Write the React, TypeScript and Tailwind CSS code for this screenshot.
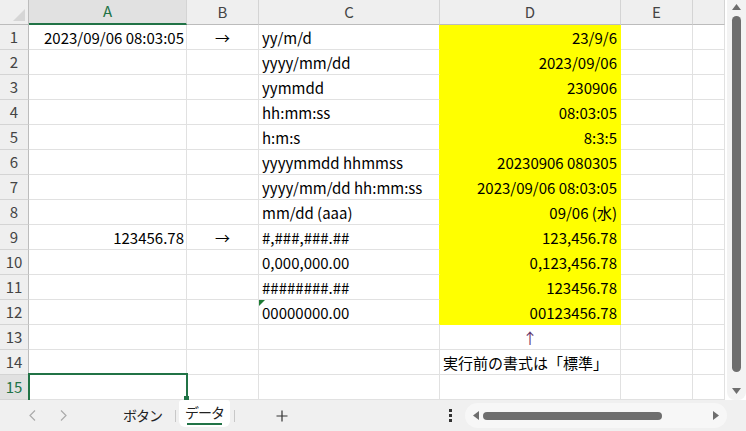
import React from 'react'

type Row = {
  a?: string
  b?: string
  c?: string
  d?: string
  dAlign?: 'left' | 'center' | 'right'
  yellow?: boolean
  tri?: boolean
}

const rows: Row[] = [
  { a: '2023/09/06 08:03:05', b: '→', c: 'yy/m/d', d: '23/9/6', yellow: true },
  { c: 'yyyy/mm/dd', d: '2023/09/06', yellow: true },
  { c: 'yymmdd', d: '230906', yellow: true },
  { c: 'hh:mm:ss', d: '08:03:05', yellow: true },
  { c: 'h:m:s', d: '8:3:5', yellow: true },
  { c: 'yyyymmdd hhmmss', d: '20230906 080305', yellow: true },
  { c: 'yyyy/mm/dd hh:mm:ss', d: '2023/09/06 08:03:05', yellow: true },
  { c: 'mm/dd (aaa)', d: '09/06 (水)', yellow: true },
  { a: '123456.78', b: '→', c: '#,###,###.##', d: '123,456.78', yellow: true },
  { c: '0,000,000.00', d: '0,123,456.78', yellow: true },
  { c: '########.##', d: '123456.78', yellow: true },
  { c: '00000000.00', d: '00123456.78', yellow: true, tri: true },
  { d: '↑', dAlign: 'center' },
  { d: '実行前の書式は「標準」', dAlign: 'left' },
  {},
]

const font = { fontFamily: '"Noto Sans CJK JP", "Noto Sans", sans-serif' }

const Cell = ({ w, children, className = '' }: { w: string; children?: React.ReactNode; className?: string }) => (
  <div className={`${w} h-full shrink-0 flex items-center border-r border-b border-[#e1e1e1] overflow-hidden whitespace-nowrap leading-none ${className}`}>
    {children}
  </div>
)

const Chevron = ({ dir }: { dir: 'left' | 'right' }) => (
  <svg width="7" height="11" viewBox="0 0 7 11">
    <polyline
      points={dir === 'left' ? '6,0.5 1,5.5 6,10.5' : '1,0.5 6,5.5 1,10.5'}
      fill="none"
      stroke="#ababab"
      strokeWidth="1.2"
    />
  </svg>
)

const App = () => {
  return (
    <div className="w-[746px] h-[431px] bg-white flex flex-col overflow-hidden text-[15px] text-black" style={font}>
      <div className="flex h-[400px]">
        {/* grid */}
        <div className="relative w-[725px] flex flex-col">
          {/* column headers */}
          <div className="flex h-[25px] bg-[#efefef] text-[#444]">
            <div className="w-[29px] h-full border-r border-b border-[#bcbcbc] relative">
              <svg className="absolute right-[3px] bottom-[3px]" width="12" height="12" viewBox="0 0 12 12">
                <polygon points="12,0 12,12 0,12" fill="#d6d6d6" />
              </svg>
            </div>
            <div className="w-[158px] h-full flex items-center justify-center bg-[#e1e1e1] border-r border-[#d4d4d4] border-b-2 border-b-[#217346] text-[#217346]">A</div>
            <div className="w-[72px] h-full flex items-center justify-center border-r border-[#d4d4d4] border-b border-b-[#bcbcbc]">B</div>
            <div className="w-[181px] h-full flex items-center justify-center border-r border-[#d4d4d4] border-b border-b-[#bcbcbc]">C</div>
            <div className="w-[181px] h-full flex items-center justify-center border-r border-[#d4d4d4] border-b border-b-[#bcbcbc]">D</div>
            <div className="w-[72px] h-full flex items-center justify-center border-r border-[#d4d4d4] border-b border-b-[#bcbcbc]">E</div>
            <div className="w-[32px] h-full border-r border-[#d4d4d4] border-b border-b-[#bcbcbc]"></div>
          </div>
          {rows.map((r, i) => {
            const last = i === 14
            return (
              <div key={i} className="flex h-[25px]">
                <div
                  className={`w-[29px] h-full shrink-0 flex items-center justify-center border-b border-[#d4d4d4] border-r ${
                    last ? 'bg-[#e1e1e1] text-[#217346] border-r-[#217346]' : 'bg-[#efefef] text-[#444] border-r-[#bcbcbc]'
                  }`}
                >
                  {i + 1}
                </div>
                <Cell w="w-[158px]" className="justify-end pr-[2px]">{r.a}</Cell>
                <Cell w="w-[72px]" className="justify-center">{r.b}</Cell>
                <Cell w="w-[181px]" className={`relative pl-[3px] overflow-visible ${r.yellow ? 'border-r-[#ffff00]' : ''}`}>
                  {r.tri && (
                    <svg className="absolute left-0 top-0" width="6" height="6" viewBox="0 0 6 6">
                      <polygon points="0,0 6,0 0,6" fill="#1e7b34" />
                    </svg>
                  )}
                  {r.c}
                </Cell>
                <Cell
                  w="w-[181px]"
                  className={`${r.yellow ? 'bg-[#ffff00] border-[#ffff00] pr-[3px] justify-end' : ''} ${
                    r.dAlign === 'center' ? 'justify-center text-[#5e2f66]' : ''
                  } ${r.dAlign === 'left' ? 'pl-[3px] overflow-visible' : ''}`}
                >
                  {r.d}
                </Cell>
                <Cell w="w-[72px]" />
                <Cell w="w-[32px]" />
              </div>
            )
          })}
          {/* selected cell A15 */}
          <div className="absolute left-[28px] top-[373px] w-[160px] h-[27px] border-2 border-[#217346] border-b-0 pointer-events-none" />
          <div className="absolute left-[184px] top-[396px] w-[5px] h-[4px] bg-[#217346]" />
        </div>
        {/* vertical scrollbar */}
        <div className="w-[21px] h-full bg-white flex justify-end">
          <div className="w-[19px] h-full bg-[#f3f3f3] rounded-b-[8px] flex flex-col items-center pt-[4px] pb-[6px]">
            <svg width="9" height="6" viewBox="0 0 9 6">
              <polygon points="4.5,0 9,6 0,6" fill="#6e6e6e" />
            </svg>
            <div className="w-[9px] h-[356px] mt-[6px] rounded-full bg-[#6e6e6e]" />
            <div className="flex-1" />
            <svg width="9" height="6" viewBox="0 0 9 6">
              <polygon points="0,0 9,0 4.5,6" fill="#6e6e6e" />
            </svg>
          </div>
        </div>
      </div>
      {/* sheet tabs */}
      <div className="h-[31px] bg-[#f0f0f0] flex items-stretch text-[14px]">
        <div className="w-[112px] flex items-center pl-[29px] gap-[24px]">
          <Chevron dir="left" />
          <Chevron dir="right" />
        </div>
        <div className="flex items-center pl-[11px] pr-[13px] text-[#222] tracking-[-1px]">ボタン</div>
        <div className="w-[1px] h-[12px] self-center bg-[#c8c8c8]" />
        <div className="ml-[3px] w-[51px] bg-white rounded-b-[6px] rounded-t-[3px] flex flex-col items-center justify-center mb-[4px] text-[#222]">
          <span className="leading-none pt-[3px] tracking-[-1px]">データ</span>
          <span className="w-[35px] h-[2px] bg-[#217346] mt-[4px]" />
        </div>
        <div className="w-[1px] h-[12px] self-center bg-[#c8c8c8] ml-[4px]" />
        <div className="flex items-center ml-[41px]">
          <svg width="12" height="12" viewBox="0 0 12 12">
            <path d="M6 0.5V11.5M0.5 6H11.5" stroke="#333" strokeWidth="1.2" />
          </svg>
        </div>
        <div className="flex-1" />
        <div className="flex items-center mr-[13px]">
          <svg width="3" height="13" viewBox="0 0 3 13">
            <rect x="0" y="0" width="3" height="3" fill="#333" />
            <rect x="0" y="5" width="3" height="3" fill="#333" />
            <rect x="0" y="10" width="3" height="3" fill="#333" />
          </svg>
        </div>
        <div className="w-[262px] mr-[19px] my-[3px] rounded-full bg-[#f7f7f7] flex items-center px-[8px] gap-[4px]">
          <svg width="6" height="9" viewBox="0 0 6 9">
            <polygon points="0,4.5 6,0 6,9" fill="#6e6e6e" />
          </svg>
          <div className="w-[179px] h-[8px] rounded-full bg-[#6e6e6e]" />
          <div className="flex-1" />
          <svg width="6" height="9" viewBox="0 0 6 9">
            <polygon points="0,0 6,4.5 0,9" fill="#6e6e6e" />
          </svg>
        </div>
      </div>
    </div>
  )
}

export default App
